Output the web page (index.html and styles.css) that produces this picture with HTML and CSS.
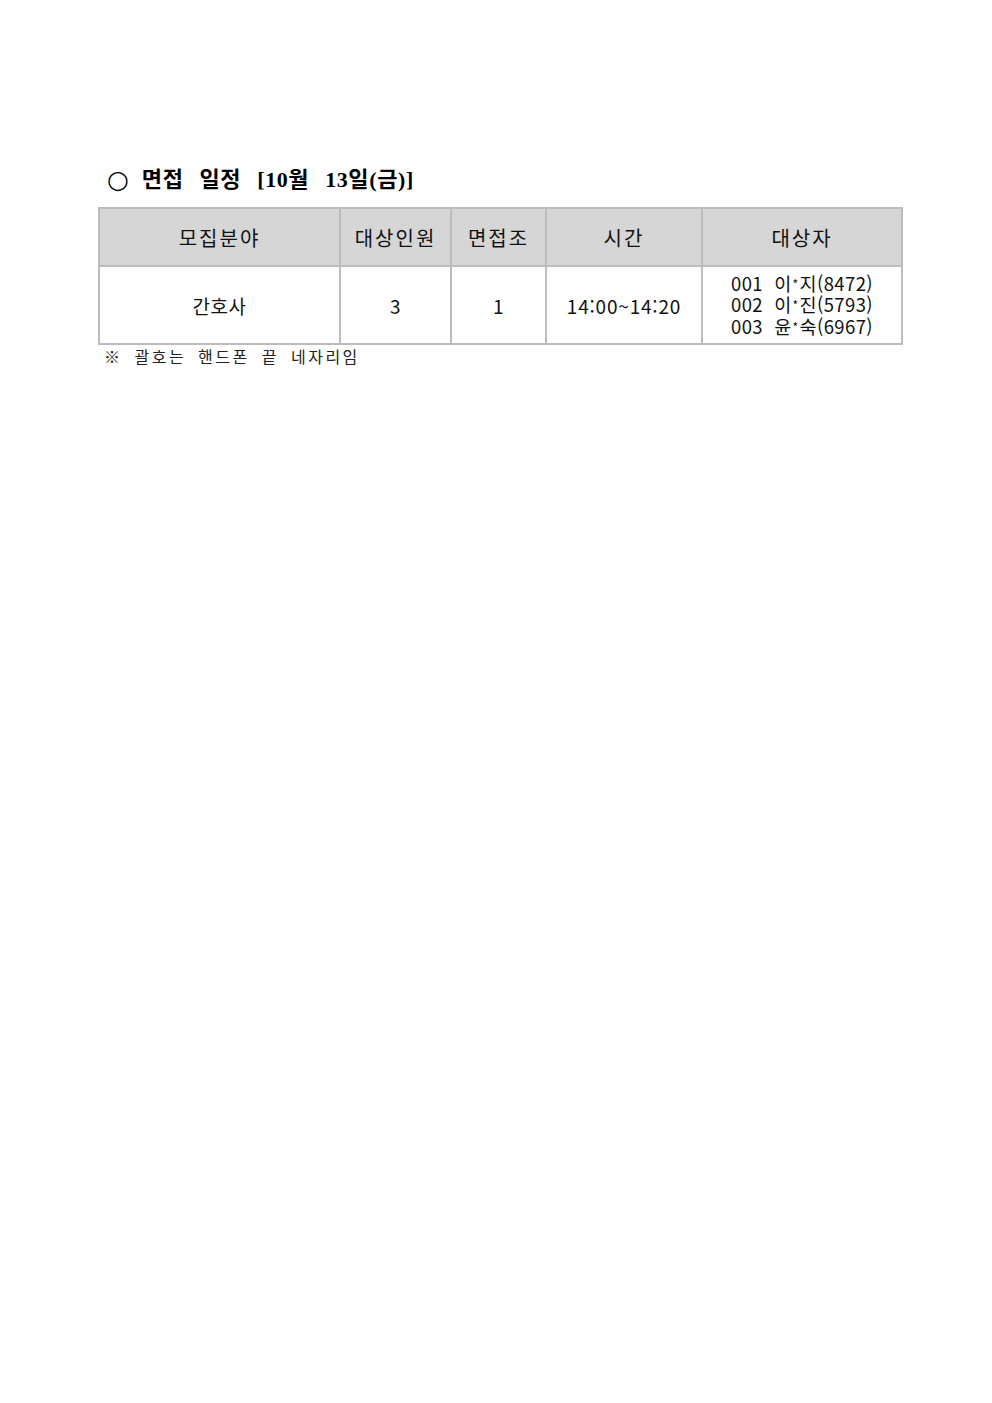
FILE: index.html
```html
<!DOCTYPE html>
<html lang="ko">
<head>
<meta charset="utf-8">
<link rel="stylesheet" href="styles.css">
</head>
<body>
<div class="page">
  <h2 class="title"><span class="circle">○</span><span class="t">면접</span><span class="t">일정</span><span class="t">[10월</span><span class="t">13일(금)]</span></h2>
  <table class="sched">
    <colgroup>
      <col class="c1"><col class="c2"><col class="c3"><col class="c4"><col class="c5">
    </colgroup>
    <thead>
      <tr><th>모집분야</th><th>대상인원</th><th>면접조</th><th>시간</th><th>대상자</th></tr>
    </thead>
    <tbody>
      <tr>
        <td>간호사</td>
        <td>3</td>
        <td>1</td>
        <td class="time">14:00~14:20</td>
        <td class="names"><div>001&nbsp; 이<span class="star">*</span>지(8472)</div><div>002&nbsp; 이<span class="star">*</span>진(5793)</div><div>003&nbsp; 윤<span class="star">*</span>숙(6967)</div></td>
      </tr>
    </tbody>
  </table>
  <p class="note">※ 괄호는 핸드폰 끝 네자리임</p>
</div>
</body>
</html>
```
FILE: styles.css
```css
html, body { margin: 0; padding: 0; background: #fff; }
.page { padding: 166px 0 0 98px; width: 804px; }
.title {
  margin: 0 0 13px 9px;
  font-family: "Liberation Serif", "Noto Sans CJK KR", serif;
  font-weight: bold;
  font-size: 22px;
  line-height: 28px;
  color: #000;
  display: flex;
  align-items: center;
}
.circle { font-family: "DejaVu Sans", sans-serif; font-weight: normal; font-size: 25px; margin-right: 13px; }
.t { margin-right: 16px; letter-spacing: 0.6px; }
.sched {
  border-collapse: collapse;
  table-layout: fixed;
  width: 803px;
  font-family: "Noto Sans CJK KR", sans-serif;
  color: #111;
  border: 2px solid #bcbcbc;
}
.c1 { width: 241px; } .c2 { width: 111px; } .c3 { width: 95px; } .c4 { width: 156px; } .c5 { width: 200px; }
.sched th, .sched td {
  border: 2px solid #bcbcbc;
  text-align: center;
  padding: 0;
  font-weight: normal;
}
.sched th { background: #d6d6d6; height: 56px; font-size: 20px; letter-spacing: 2px; }
.sched td { height: 76px; font-size: 19px; letter-spacing: 0.5px; }
.sched td.time { letter-spacing: 0.8px; }
.sched td.names { font-size: 18.5px; letter-spacing: 0.4px; }
.names div { line-height: 21.5px; height: 21.5px; }
.star { font-size: 12px; vertical-align: 2px; margin: 0 1px; }
.note {
  margin: 0 0 0 6px;
  font-family: "Noto Sans CJK KR", sans-serif;
  font-size: 16px;
  line-height: 22px;
  letter-spacing: 2.5px;
  word-spacing: 5px;
  color: #222;
}
```
